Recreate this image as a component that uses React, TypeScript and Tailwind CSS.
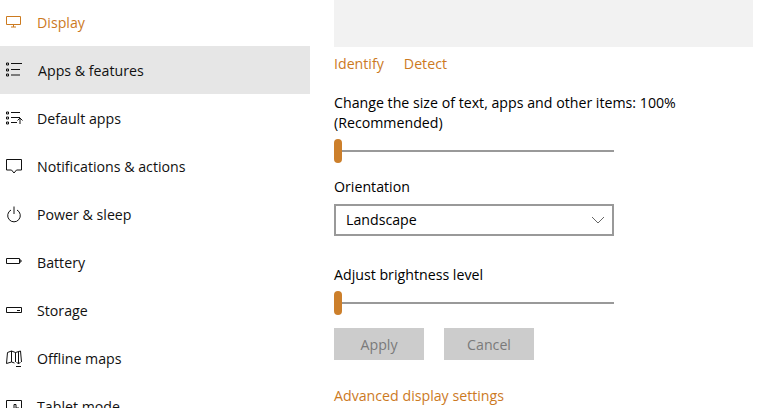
import React from 'react';

const font = { fontFamily: '"Open Sans", sans-serif' };

const Icon = ({ children }: { children: React.ReactNode }) => (
  <svg width="18" height="16" viewBox="0 0 18 16" fill="none" stroke="currentColor" className="overflow-visible shrink-0">
    {children}
  </svg>
);

const items = [
  { label: 'Display', text: 'text-[#cc7a1f]', icon: <Icon><path d="M1.500 2.500h14v8h-14zM6 13h5M8.500 11v2" /></Icon> },
  { label: 'Apps & features', active: true, icon: <Icon><path d="M1.500 1h2v2h-2zM1.500 7h2v2h-2zM1.500 12h2v2h-2zM6 1.500h11M6 7.500h9M6 13h9" /></Icon> },
  { label: 'Default apps', icon: <Icon><path d="M1.500 2h2v2h-2zM1.500 7h2v2h-2zM1.500 12h2v2h-2zM6 2.500h9M6 7.500h9M6 12.500h6M15 14V8M12.500 10.500L15 8l2.500 2.500" /></Icon> },
  { label: 'Notifications & actions', icon: <Icon><path d="M1.500 1.500h15v10.500h-5l-2.500 3-2.500-3h-5z" /></Icon> },
  { label: 'Power & sleep', icon: <Icon><path d="M9 .5v7.500M6 4a6.300 6.300 0 1 0 6 0" /></Icon> },
  { label: 'Battery', icon: <Icon><path d="M1.500 4.500h13v5h-13zM14.500 6h1.500v2h-1.500z" /></Icon> },
  { label: 'Storage', icon: <Icon><path d="M1.500 5.500h15v5h-15zM12 8.500h3" /></Icon> },
  { label: 'Offline maps', icon: <Icon><path d="M1.500 13.500l1-11 4-1.500 4 1.500 5-1.500 1 11M1.500 13.500l5-1.500 3 1M6.500 1v11M10.500 2.500V12M13.500 2v7M11 16.500h5M13.500 9v5M11.500 12l2 2 2-2" /></Icon> },
  { label: 'Tablet mode', icon: <Icon><path d="M1.500 2.500h15v11h-15zM9 13V6.500h2V10h3v3" /></Icon> },
];

function Slider() {
  return (
    <div className="flex items-center w-[280px] h-6">
      <div className="w-2 h-6 rounded-[4px] bg-[#cc7f2b]" />
      <div className="flex-1 h-0.5 bg-[#999999]" />
    </div>
  );
}

function App() {
  return (
    <div className="flex h-[408px] w-[764px] overflow-hidden bg-white text-[14.2px] text-black" style={font}>
      <div className="w-[310px] shrink-0 -mt-0.5">
        {items.map(item => (
          <div
            key={item.label}
            className={`flex items-center h-12 pl-[5px] gap-[14px] ${item.active ? 'bg-[#e6e6e6]' : ''} ${item.text || 'text-[#111111]'}`}
          >
            {item.icon}
            <span className={`pt-0.5 ${item.active ? 'ml-px' : ''}`}>{item.label}</span>
          </div>
        ))}
      </div>
      <div className="flex-1 pl-6 flex flex-col items-start">
        <div className="w-[419px] h-[47px] bg-[#f2f2f2]" />
        <div className="flex gap-5 mt-[7px] h-5 items-center text-[#cc7a1f]">
          <span>Identify</span>
          <span>Detect</span>
        </div>
        <div className="mt-[19px] w-[400px] leading-5">
          Change the size of text, apps and other items: 100%
          <br />
          (Recommended)
        </div>
        <div className="mt-[6px]"><Slider /></div>
        <div className="mt-[14px] h-5 leading-5">Orientation</div>
        <div className="mt-[7px] w-[280px] h-8 border-2 border-[#999999] flex items-center justify-between pl-[10px] pr-[7px]">
          <span>Landscape</span>
          <svg width="14" height="8" viewBox="0 0 14 8" fill="none" stroke="#666666">
            <path d="M1 1l6 6 6-6" />
          </svg>
        </div>
        <div className="mt-[29px] h-5 leading-5">Adjust brightness level</div>
        <div className="mt-[6px]"><Slider /></div>
        <div className="flex gap-5 mt-[13px]">
          <div className="w-[90px] h-8 pt-0.5 bg-[#cccccc] text-[#7a7a7a] flex items-center justify-center">Apply</div>
          <div className="w-[90px] h-8 pt-0.5 bg-[#cccccc] text-[#7a7a7a] flex items-center justify-center">Cancel</div>
        </div>
        <div className="mt-[26px] h-5 leading-5 text-[#cc7a1f]">Advanced display settings</div>
      </div>
    </div>
  );
}

export default App;
